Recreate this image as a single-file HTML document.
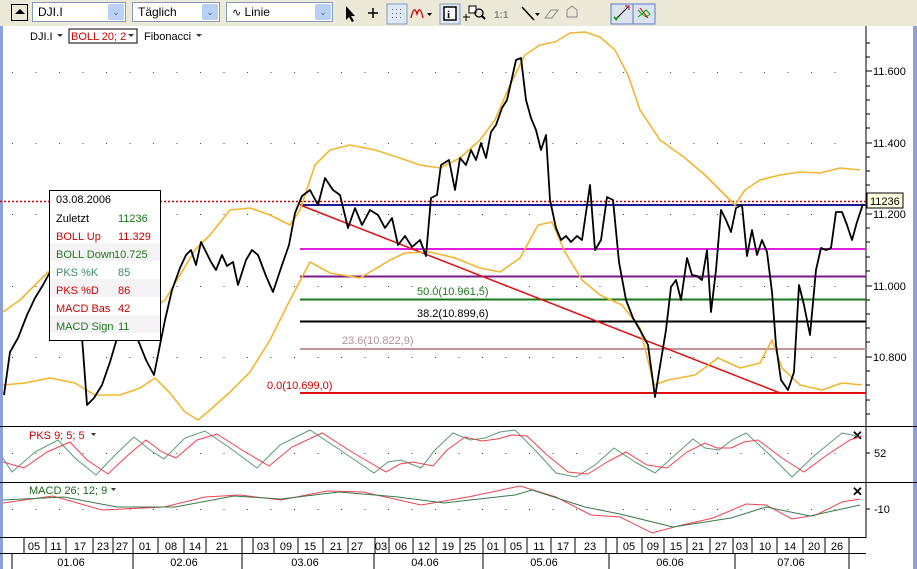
<!DOCTYPE html>
<html><head><meta charset="utf-8"><style>
body{margin:0;width:917px;height:569px;overflow:hidden;background:#fff;font-family:"Liberation Sans",sans-serif;position:relative}
.tb{position:absolute;left:0;top:0;width:917px;height:26px;background:#ece9d8}
.cb{position:absolute;top:2px;height:20px;background:#fff;border:1px solid #7f9db9;box-sizing:border-box;font-size:12px;line-height:18px;padding-left:5px}
.dd{position:absolute;right:1px;top:1px;width:16px;height:16px;background:#b9d0f7;border-radius:2px;color:#4d6185;font-size:9px;text-align:center;line-height:16px}
svg{position:absolute;left:0;top:0}
</style></head><body>
<div class="tb"></div>
<div style="position:absolute;left:11px;top:4px;width:15px;height:15px;border:1px solid #000;background:#ece9d8"><div style="margin:4px auto 0;width:0;height:0;border-left:5px solid transparent;border-right:5px solid transparent;border-bottom:5px solid #000"></div></div>
<div class="cb" style="left:32px;width:94px">DJI.I<div class="dd">&#8964;</div></div>
<div class="cb" style="left:132px;width:88px">Täglich<div class="dd">&#8964;</div></div>
<div class="cb" style="left:226px;width:107px"><span style="font-size:11px">&#8767;</span> Linie<div class="dd">&#8964;</div></div>
<svg width="917" height="569" viewBox="0 0 917 569">
<path d="M346 6 L346 20 L349 17 L352 22 L354 21 L351 16 L355 16 Z" fill="#000"/>
<path d="M373 8v10M368 13h10" stroke="#000" stroke-width="1.5"/>
<rect x="387" y="4" width="20" height="20" fill="#e0e7f5" stroke="#7f9db9"/>
<g fill="#666"><rect x="392" y="9" width="1" height="1"/><rect x="396" y="9" width="1" height="1"/><rect x="400" y="9" width="1" height="1"/><rect x="392" y="13" width="1" height="1"/><rect x="396" y="13" width="1" height="1"/><rect x="400" y="13" width="1" height="1"/><rect x="392" y="17" width="1" height="1"/><rect x="396" y="17" width="1" height="1"/><rect x="400" y="17" width="1" height="1"/></g>
<path d="M411 18 Q414 4 417 14 Q420 4 423 18" stroke="#c00" fill="none" stroke-width="1.3"/>
<path d="M427 13h5l-2.5 3z" fill="#000"/>
<rect x="440" y="4" width="20" height="20" fill="#e0e7f5" stroke="#7f9db9"/>
<rect x="444" y="7" width="12" height="13" fill="#fff" stroke="#000" stroke-width="1.5"/><text x="447" y="18" font-size="11" font-weight="bold" font-family="Liberation Serif">i</text>
<path d="M463 17h7M466 14v7" stroke="#000"/><rect x="469" y="6" width="7" height="7" fill="#fff" stroke="#000"/>
<circle cx="479" cy="13" r="4" fill="none" stroke="#000" stroke-width="1.3"/><path d="M482 16l3 3" stroke="#000" stroke-width="2"/>
<text x="494" y="18" font-size="10" fill="#888" font-weight="bold">1:1</text>
<path d="M522 7l12 13" stroke="#000" stroke-width="1.5"/><path d="M535 13h5l-2.5 3z" fill="#000"/>
<path d="M545 18l6-8h7l-6 8z" fill="none" stroke="#888"/>
<path d="M567 10l5-4 5 4v7h-10z" fill="none" stroke="#888"/>
<rect x="611" y="4" width="22" height="20" fill="#dde3ee" stroke="#5a7ac6"/><path d="M616 19l12-12" stroke="#000"/><path d="M625 6l4 0 0 4" stroke="#c00" fill="none"/><path d="M614 17l3 3" stroke="#0a0" stroke-width="2"/>
<rect x="633" y="4" width="22" height="20" fill="#dde3ee" stroke="#5a7ac6"/><path d="M638 10l4 4 4-4 4 4M638 17l4-3 4 3 4-3" stroke="#0a0" fill="none"/><path d="M640 8l8 10" stroke="#c00"/>
<rect x="0" y="26" width="3" height="543" fill="#8ea0d8"/>
<rect x="913" y="26" width="4" height="543" fill="#8ea0d8"/>
<text x="30" y="40" font-size="11">DJI.I</text><path d="M57 34h6l-3 3z" fill="#333"/>
<rect x="69" y="29" width="68" height="14" fill="none" stroke="#000"/>
<text x="71" y="40" font-size="11" fill="#c00">BOLL 20; 2</text><path d="M128 34h6l-3 3z" fill="#333"/>
<text x="144" y="40" font-size="11">Fibonacci</text><path d="M196 34h6l-3 3z" fill="#333"/>
<path d="M866 26V538" stroke="#000"/>
<g stroke="#000">
<path d="M866 43h4M866 57h4M866 71h6M866 86h4M866 100h4M866 114h4M866 128h4M866 143h6M866 157h4M866 171h4M866 185h4M866 200h4M866 214h6M866 228h4M866 242h4M866 257h4M866 271h4M866 286h6M866 300h4M866 314h4M866 328h4M866 342h4M866 357h6M866 371h4M866 385h4M866 400h4M866 414h4"/>
</g>
<g font-size="11" fill="#000"><text x="873" y="75">11.600</text><text x="873" y="147">11.400</text><text x="873" y="218">11.200</text><text x="873" y="290">11.000</text><text x="873" y="361">10.800</text></g>
<g stroke="#444" stroke-width="1" stroke-dasharray="1 22.5">
<path d="M12 72.5H850M12 143.5H850M12 214.5H850M12 286.5H850M12 357.5H850"/>
<path d="M12 453.5H850M12 509.5H850"/>
</g>
<path d="M0 201.5H866" stroke="#c00" stroke-width="1.5" stroke-dasharray="2 2"/>
<g stroke-width="2">
<path d="M300 205H866" stroke="#1a1a9a"/>
<path d="M300 249H866" stroke="#e020e0"/>
<path d="M300 276.5H866" stroke="#7a1a8a"/>
<path d="M300 299.5H866" stroke="#1a7a1a"/>
<path d="M300 321.5H866" stroke="#000"/>
<path d="M300 349H866" stroke="#c09498"/>
<path d="M300 393H866" stroke="#e01010"/>
</g>
<path d="M300 205L780 393" stroke="#e01010" stroke-width="1.5"/>
<g font-size="11"><text x="417" y="295" fill="#1a7a1a">50.0(10.961,5)</text><text x="417" y="317" fill="#000">38.2(10.899,6)</text><text x="342" y="344" fill="#b09094">23.6(10.822,9)</text><text x="267" y="389" fill="#c00">0.0(10.699,0)</text></g>
<g fill="none" stroke="#f2b630" stroke-width="1.6" stroke-linejoin="round">
<polyline points="3,312 20,300 35,285 48,272 60,268 75,278 90,290 110,298 130,305 150,310 165,300 180,275 195,250 210,235 230,210 250,208 270,215 290,225 300,210 315,165 330,150 350,145 375,150 400,158 420,165 440,168 460,158 480,140 495,120 510,85 525,55 540,45 555,42 570,33 585,32 600,37 615,50 628,75 640,110 660,140 685,158 705,175 725,195 735,205 745,190 760,180 780,175 800,172 820,173 840,168 860,170"/>
<polyline points="3,385 25,383 50,378 75,383 95,395 120,395 140,388 155,378 170,393 185,412 198,420 210,410 230,392 250,372 270,340 290,300 310,262 330,273 360,278 390,260 405,253 430,252 455,258 480,268 500,272 520,258 538,225 552,222 565,252 582,280 600,295 622,305 640,328 654,385 668,380 695,375 718,358 740,368 760,363 772,340 782,368 800,385 822,390 842,383 862,385"/>
</g>
<polyline fill="none" stroke="#000" stroke-width="1.8" stroke-linejoin="round" points="4,395 10,352 18,338 27,315 35,298 43,285 50,272 57,262 65,262 72,272 78,292 83,350 87,405 94,398 102,385 110,362 118,335 128,325 138,340 146,360 154,375 160,345 165,320 172,290 180,268 186,255 191,250 196,265 201,242 206,252 211,262 216,270 222,255 227,266 233,262 238,285 246,260 252,250 258,255 266,276 273,292 281,268 289,245 295,213 302,196 310,190 318,205 325,178 333,190 340,195 348,228 355,208 362,225 370,210 378,215 385,228 392,218 398,245 405,236 412,247 420,240 426,256 431,198 437,195 441,165 449,160 455,190 460,158 466,165 471,150 476,160 481,143 486,158 491,132 496,125 502,108 507,100 512,78 516,60 521,58 526,100 531,118 536,130 541,150 546,135 550,200 556,228 561,240 566,236 571,242 577,236 582,240 590,185 595,250 601,240 607,197 613,200 619,262 626,300 633,318 640,330 648,345 655,397 661,360 666,330 671,287 676,280 681,300 687,258 692,275 697,276 702,280 707,250 711,312 716,270 721,210 726,220 731,232 736,208 742,205 747,256 752,230 757,255 762,240 767,252 772,292 776,345 781,380 788,390 794,372 799,285 804,305 810,335 816,270 821,248 826,250 831,248 836,212 842,212 847,225 852,240 857,222 863,204"/>
<rect x="867" y="193" width="36" height="15" fill="#ffffe0" stroke="#000"/><text x="870" y="205" font-size="11">11236</text>
<rect x="49.5" y="190.5" width="111" height="150" fill="#fff" stroke="#000"/>
<g fill="#f6f3f6"><rect x="50" y="243" width="110" height="18"/><rect x="50" y="279" width="110" height="18"/><rect x="50" y="315" width="110" height="18"/></g>
<g font-size="11">
<text x="56" y="203">03.08.2006</text>
<text x="56" y="222">Zuletzt</text><text x="118" y="222" fill="#1a7a1a">11236</text>
<text x="56" y="240" fill="#c00">BOLL Up</text><text x="118" y="240" fill="#c00">11.329</text>
<text x="56" y="258" fill="#1a7a1a">BOLL Down</text><text x="114" y="258" fill="#1a7a1a">10.725</text>
<text x="56" y="276" fill="#3a8a6a">PKS %K</text><text x="118" y="276" fill="#3a8a6a">85</text>
<text x="56" y="294" fill="#c00">PKS %D</text><text x="118" y="294" fill="#c00">86</text>
<text x="56" y="312" fill="#c00">MACD Bas</text><text x="118" y="312" fill="#c00">42</text>
<text x="56" y="330" fill="#1a7a1a">MACD Sign</text><text x="118" y="330" fill="#1a7a1a">11</text>
</g>
<path d="M0 426.5H917M0 482.5H917M0 537.5H866" stroke="#000"/>
<text x="29" y="439" font-size="11" fill="#c00">PKS 9; 5; 5</text><path d="M91 433h5l-2.5 3z" fill="#333"/>
<text x="852" y="440" font-size="13" font-weight="bold">✕</text>
<path d="M866 453h4" stroke="#000"/><text x="874" y="457" font-size="11">52</text>
<polyline fill="none" stroke="#5a9a7a" stroke-width="1" points="3,458 12,472 35,452 58,440 75,458 96,475 115,455 134,437 150,450 164,459 185,438 205,431 230,448 257,468 280,445 310,430 340,450 374,473 388,462 401,460 421,468 435,450 453,433 470,440 485,438 500,432 515,430 535,450 556,473 576,477 595,465 614,448 635,462 655,473 675,455 693,439 705,448 719,450 732,440 746,433 770,455 792,477 815,455 842,433 857,436"/>
<polyline fill="none" stroke="#f04050" stroke-width="1" points="3,462 24,468 47,452 70,442 87,460 108,474 127,456 146,440 162,452 176,458 197,440 217,434 242,450 269,466 292,447 322,433 352,452 386,472 400,464 413,462 433,466 447,450 465,437 482,441 497,439 512,435 527,436 547,455 568,472 588,474 607,462 626,452 647,465 667,468 687,452 705,443 717,448 731,448 744,442 758,440 782,458 804,472 827,455 850,440 862,436"/>
<text x="29" y="494" font-size="11" fill="#1a6a1a">MACD 26; 12; 9</text><path d="M111 488h5l-2.5 3z" fill="#333"/>
<text x="852" y="496" font-size="13" font-weight="bold">✕</text>
<path d="M866 509h4" stroke="#000"/><text x="874" y="513" font-size="11">-10</text>
<polyline fill="none" stroke="#f04050" stroke-width="1" points="3,503 53,496 102,510 164,507 205,497 240,495 281,500 327,491 363,492 421,505 468,497 520,486 556,497 591,515 620,517 652,533 678,526 713,518 746,504 766,505 792,519 816,515 842,502 860,499"/>
<polyline fill="none" stroke="#3a7a4a" stroke-width="1" points="3,500 64,497 117,507 175,507 234,496 281,499 339,492 398,497 444,503 515,495 532,490 585,507 620,514 673,527 731,518 766,507 810,516 860,505"/>
<path d="M0 553.5H866" stroke="#000"/>
<g stroke="#000">
<path d="M24 538v15M46 538v15M66 538v15M93 538v15M113 538v15M133 538v15M158 538v15M184 538v15M206 538v15M242 538v15M253 538v15M274 538v15M298 538v15M323 538v15M348 538v15M375 538v15M389 538v15M413 538v15M436 538v15M460 538v15M483 538v15M505 538v15M527 538v15M551 538v15M575 538v15M606 538v15M617 538v15M642 538v15M664 538v15M687 538v15M710 538v15M733 538v15M752 538v15M777 538v15M803 538v15M825 538v15M849 538v15"/>
<path d="M12 553v16M133 553v16M242 553v16M374 553v16M483 553v16M609 553v16M735 553v16M849 553v16"/>
</g>
<g font-size="11" text-anchor="middle">
<text x="34" y="550">05</text><text x="56" y="550">11</text><text x="80" y="550">17</text><text x="103" y="550">23</text><text x="122" y="550">27</text><text x="145" y="550">01</text><text x="171" y="550">08</text><text x="195" y="550">14</text><text x="222" y="550">21</text><text x="263" y="550">03</text><text x="286" y="550">09</text><text x="310" y="550">15</text><text x="336" y="550">21</text><text x="357" y="550">27</text><text x="381" y="550">03</text><text x="401" y="550">06</text><text x="424" y="550">12</text><text x="448" y="550">19</text><text x="470" y="550">25</text><text x="493" y="550">01</text><text x="516" y="550">05</text><text x="539" y="550">11</text><text x="563" y="550">17</text><text x="590" y="550">23</text><text x="629" y="550">05</text><text x="653" y="550">09</text><text x="676" y="550">15</text><text x="698" y="550">21</text><text x="721" y="550">27</text><text x="742" y="550">03</text><text x="765" y="550">10</text><text x="790" y="550">14</text><text x="814" y="550">20</text><text x="837" y="550">26</text>
<text x="71" y="566">01.06</text><text x="184" y="566">02.06</text><text x="305" y="566">03.06</text><text x="425" y="566">04.06</text><text x="544" y="566">05.06</text><text x="670" y="566">06.06</text><text x="791" y="566">07.06</text>
</g>
</svg>
</body></html>
